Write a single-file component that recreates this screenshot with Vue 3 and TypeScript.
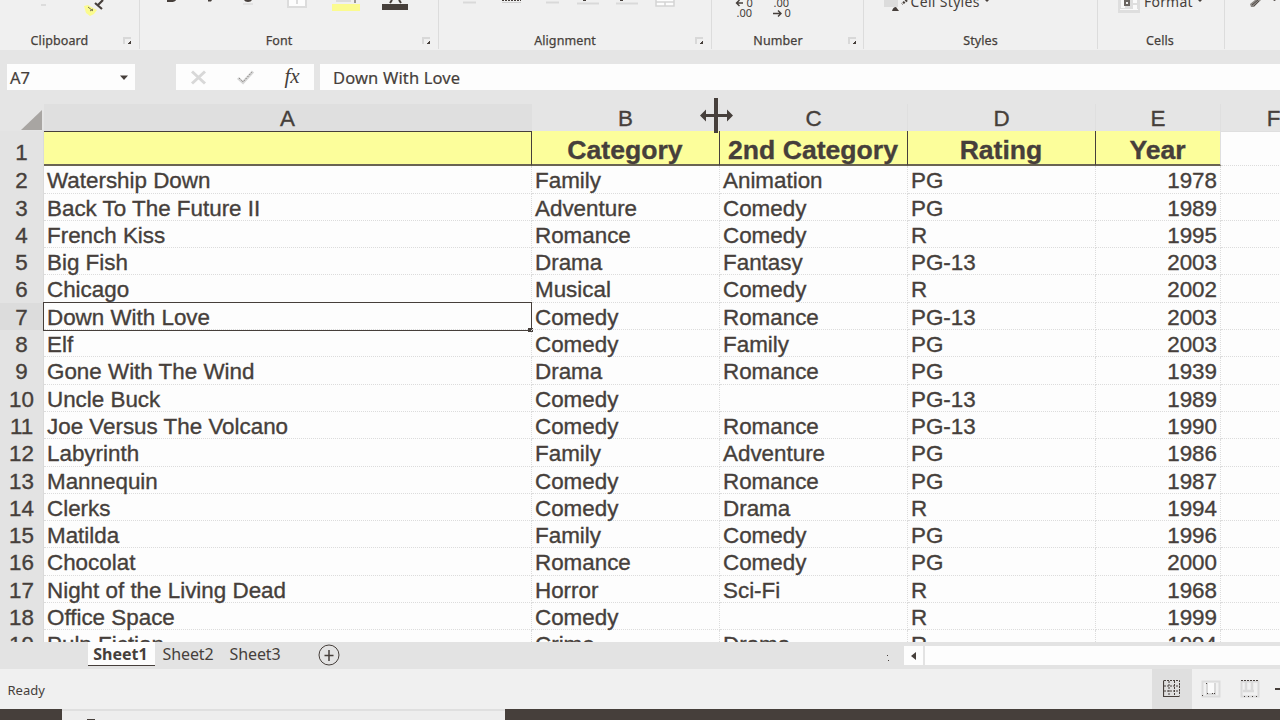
<script setup lang="ts">
interface Movie {
  row: number
  title: string
  category: string
  second: string
  rating: string
  year: string
}

const source: [string, string, string, string, string][] = [
  ['Watership Down', 'Family', 'Animation', 'PG', '1978'],
  ['Back To The Future II', 'Adventure', 'Comedy', 'PG', '1989'],
  ['French Kiss', 'Romance', 'Comedy', 'R', '1995'],
  ['Big Fish', 'Drama', 'Fantasy', 'PG-13', '2003'],
  ['Chicago', 'Musical', 'Comedy', 'R', '2002'],
  ['Down With Love', 'Comedy', 'Romance', 'PG-13', '2003'],
  ['Elf', 'Comedy', 'Family', 'PG', '2003'],
  ['Gone With The Wind', 'Drama', 'Romance', 'PG', '1939'],
  ['Uncle Buck', 'Comedy', '', 'PG-13', '1989'],
  ['Joe Versus The Volcano', 'Comedy', 'Romance', 'PG-13', '1990'],
  ['Labyrinth', 'Family', 'Adventure', 'PG', '1986'],
  ['Mannequin', 'Comedy', 'Romance', 'PG', '1987'],
  ['Clerks', 'Comedy', 'Drama', 'R', '1994'],
  ['Matilda', 'Family', 'Comedy', 'PG', '1996'],
  ['Chocolat', 'Romance', 'Comedy', 'PG', '2000'],
  ['Night of the Living Dead', 'Horror', 'Sci-Fi', 'R', '1968'],
  ['Office Space', 'Comedy', '', 'R', '1999'],
  ['Pulp Fiction', 'Crime', 'Drama', 'R', '1994'],
]

const movies: Movie[] = source.map(([title, category, second, rating, year], i) => ({
  row: i + 2,
  title,
  category,
  second,
  rating,
  year,
}))

const letters = ['A', 'B', 'C', 'D', 'E', 'F']
const headings = ['', 'Category', '2nd Category', 'Rating', 'Year']
const selectedRow = 7
</script>

<template>
  <div class="app">
    <header class="ribbon">
      <section class="group g-clipboard">
        <svg class="art" width="138" height="32" viewBox="0 0 138 32">
          <path d="M41 5h5" stroke="#dcdcdc" stroke-width="2" />
          <path d="M84 6l4-1 5 3 4 2-3 4-4 2-4-3z" fill="#fbfb8f" />
          <path d="M103 0l-6 6M95 3l7 6" stroke="#463f3b" stroke-width="2.2" fill="none" />
          <path d="M88 7l5 4M90 11l3-2" stroke="#77724f" stroke-width="1" />
        </svg>
        <span class="name">Clipboard</span>
        <i class="launcher"></i>
      </section>
      <section class="group g-font">
        <svg class="art" width="298" height="32" viewBox="0 0 298 32">
          <path d="M27 0h9q-1 2-5 2h-4zM68 0h4l-1 1.5h-3zM104 0h8q-1 2-4 2t-4-2z" fill="#463f3b" />
          <path d="M103 4h10" stroke="#d4d4d4" />
          <path d="M148 0v7h18V0M157 0v4" stroke="#dcdcdc" stroke-width="2" fill="#fdfdfd" />
          <path d="M196 1h15" stroke="#dcdcdc" stroke-width="2" />
          <path d="M215 0v3" stroke="#463f3b" />
          <rect x="192" y="4" width="28" height="7" fill="#fbfb90" />
          <path d="M252 0l-2 3M259 0l2 3" stroke="#463f3b" stroke-width="2" />
          <rect x="242" y="4" width="26" height="6" fill="#463f3b" />
        </svg>
        <span class="name">Font</span>
        <i class="launcher"></i>
      </section>
      <section class="group g-align">
        <svg class="art" width="272" height="32" viewBox="0 0 272 32">
          <path d="M24 2.5h13M107 2.5h13M138 3.5h22M177 3.5h22" stroke="#d9d9d9" stroke-width="2" />
          <path d="M63 .5h19" stroke="#463f3b" stroke-dasharray="2 1" />
          <path d="M63 2.5h19" stroke="#cfcfcf" />
          <path d="M144 .5h3M181 .5h3" stroke="#463f3b" />
          <path d="M217 0v6h18V0M217 2h18M226 2v4" stroke="#d4d4d4" stroke-width="1.5" fill="#fdfdfd" />
        </svg>
        <span class="name">Alignment</span>
        <i class="launcher"></i>
      </section>
      <section class="group g-number">
        <svg class="art" width="152" height="32" viewBox="0 0 152 32">
          <g class="digits">
            <text x="34.500" y="6.800">0</text>
            <text x="24.500" y="17.200">.00</text>
            <text x="61.500" y="6.800">.00</text>
            <text x="72.500" y="17.200">0</text>
          </g>
          <path d="M31 3h-6.500M27.500 0l-3 3 3 3M61 13.500h8M66 10.500l3 3-3 3" class="stroke" stroke-width="1.400" />
        </svg>
        <span class="name">Number</span>
        <i class="launcher"></i>
      </section>
      <section class="group g-styles">
        <svg class="art" width="232" height="32" viewBox="0 0 232 32">
          <path d="M20 0h14v7H20z" fill="#dcdcdc" />
          <path d="M43 0l-5 4" stroke="#463f3b" stroke-width="2.5" stroke-dasharray="2 1" />
          <path d="M28 11q1-4 4-4l3 4z" fill="#463f3b" />
          <text x="46.500" y="7" class="cmd" textLength="69">Cell Styles</text>
          <path d="M121 0h4l-2 2z" fill="#463f3b" />
        </svg>
        <span class="name">Styles</span>
      </section>
      <section class="group g-cells">
        <svg class="art" width="126" height="32" viewBox="0 0 126 32">
          <path d="M20 0h22v13H20z" fill="#dedede" />
          <path d="M23 0h4v8h-4zM35 0h4v3h-4zM35 5h4v4h-4zM22 9h18v1H22z" fill="#fafafa" />
          <path d="M26 0h6v6h-6z" fill="#6b6662" />
          <path d="M28 2h2v2h-2z" fill="#f0f0f0" />
          <text x="46" y="7" class="cmd" textLength="48.500">Format</text>
          <path d="M100 0h4l-2 2z" fill="#463f3b" />
        </svg>
        <span class="name">Cells</span>
      </section>
      <section class="group g-rest">
        <svg class="art" width="55" height="32" viewBox="0 0 55 32">
          <path d="M25 4l5-4h6l-7 7h-3z" fill="#8c8884" />
          <path d="M27 5l6-5M29 6l5-5" stroke="#463f3b" stroke-width=".8" />
          <path d="M48 0h3l-1.500 1z" fill="#463f3b" />
        </svg>
      </section>
    </header>

    <div class="formula-bar">
      <div class="name-box">
        <span>A7</span>
        <svg width="8" height="5" viewBox="0 0 8 5"><path d="M0 .5h8L4 5z" fill="#463f3b" /></svg>
      </div>
      <div class="entry">
        <svg width="138" height="26" viewBox="0 0 138 26">
          <path d="M16 7.500l13 12M29 7.500l-13 12" stroke="#d8d8d8" stroke-width="3" />
          <path d="M62 14l5 4.500 10-11" stroke="#d5d5d5" stroke-width="3" fill="none" />
          <path d="M63 14l4 4 9-10" stroke="#6e6965" stroke-width="1" stroke-dasharray="1 1.500" fill="none" />
          <text x="108.500" y="19" class="fx">fx</text>
        </svg>
      </div>
      <div class="formula">Down With Love</div>
    </div>

    <main class="sheet">
      <div class="grid">
        <div class="line letters">
          <div class="corner">
            <svg width="21" height="20" viewBox="0 0 21 20"><path d="M21 0v20H0z" fill="#a8a5a2" /></svg>
          </div>
          <div v-for="l in letters" :key="l" class="letter" :class="{ active: l === 'A' }">{{ l }}</div>
        </div>
        <div class="line headings">
          <div class="num">1</div>
          <div v-for="(h, i) in headings" :key="i" class="heading">{{ h }}</div>
          <div class="cell"></div>
        </div>
        <div v-for="m in movies" :key="m.row" class="line record">
          <div class="num" :class="{ active: m.row === selectedRow }">{{ m.row }}</div>
          <div class="cell">
            {{ m.title }}
            <div v-if="m.row === selectedRow" class="selection"></div>
          </div>
          <div class="cell">{{ m.category }}</div>
          <div class="cell">{{ m.second }}</div>
          <div class="cell">{{ m.rating }}</div>
          <div class="cell year">{{ m.year }}</div>
          <div class="cell"></div>
        </div>
      </div>
      <svg class="resize" width="34" height="36" viewBox="0 0 34 36">
        <path d="M14 0h4v35h-4z" fill="#463f3b" />
        <path d="M0 17.500L6 11.500v4.500h21v-4.500l6 6-6 6v-4.500H6v4.500z" fill="#463f3b" />
      </svg>
    </main>

    <nav class="tabs">
      <span class="tab current">Sheet1</span>
      <span class="tab second-tab">Sheet2</span>
      <span class="tab third-tab">Sheet3</span>
      <svg class="add" width="22" height="22" viewBox="0 0 22 22">
        <circle cx="11" cy="11" r="10" class="stroke" />
        <path d="M11 6v11M6.500 11.500h9" class="stroke" stroke-width="1.500" />
      </svg>
      <svg class="grip" width="4" height="10" viewBox="0 0 4 10"><path d="M1 1h1v1H1zM2 6h1v1H2z" fill="#463f3b" /></svg>
      <div class="scroll-button">
        <svg width="5" height="8" viewBox="0 0 5 8"><path d="M5 0v8L0 4z" fill="#463f3b" /></svg>
      </div>
      <div class="track"></div>
    </nav>

    <footer class="status">
      <span class="ready">Ready</span>
      <div class="view chosen">
        <svg width="18" height="18" viewBox="0 0 18 18">
          <path d="M.5 .5v16h16" class="stroke" stroke-width="1.200" />
          <path d="M1 .5h15.500v15M1 6h16M1 11h16M6 1v15M11.500 1v15" class="stroke" stroke-dasharray="2 1" />
        </svg>
      </div>
      <svg class="view-icon" width="20" height="18" viewBox="0 0 20 18">
        <path d="M1.500 1.500h17v15h-17z" fill="#f1f1f1" stroke="#dcdcdc" stroke-width="2" />
        <path d="M6 3v11h8V3" fill="#fafafa" stroke="#d8d8d8" stroke-width="2" />
        <path d="M5 3h1v1H5zM6 13h1v1H6zM11 13h1v1h-1zM13 13h1v1h-1zM1 15h1v1H1z" fill="#463f3b" />
      </svg>
      <svg class="view-icon last" width="20" height="18" viewBox="0 0 20 18">
        <path d="M1.500 1.500h17v15h-17z" fill="#f1f1f1" stroke="#dadada" stroke-width="2" />
        <path d="M6 1v10M12 1v10M3 11h11" stroke="#dadada" stroke-width="2.500" />
        <path d="M1 .5h18" stroke="#463f3b" stroke-dasharray="2 1" />
        <path d="M4 16.500h15" stroke="#463f3b" stroke-dasharray="1 3" />
      </svg>
      <i class="minus"></i>
    </footer>
    <div class="taskbar">
      <div class="search"><i></i></div>
    </div>
  </div>
</template>

<style>
body {
  overflow: hidden;
}
</style>

<style scoped>
.app {
  width: 1280px;
  height: 720px;
  display: flex;
  flex-direction: column;
  overflow: hidden;
  background: #e5e5e5;
  color: #463f3b;
  font-family: 'Noto Sans', 'Open Sans', sans-serif;
}
svg {
  display: block;
}
.stroke {
  fill: none;
  stroke: #463f3b;
}
.ribbon {
  height: 50px;
  flex: none;
  display: flex;
  background: #f0f0f0;
}
.group {
  box-sizing: border-box;
  height: 49px;
  flex: none;
  display: grid;
  grid-template: 32px 17px / 1fr auto;
  border-right: 1px solid #dcdcdc;
}
.art {
  grid-area: 1 / 1 / 2 / 3;
}
.name {
  grid-area: 2 / 1 / 3 / 3;
  justify-self: center;
  font-size: 12.500px;
  line-height: 17px;
  letter-spacing: 0.1px;
  white-space: nowrap;
  -webkit-text-stroke: 0.25px #463f3b;
}
.launcher {
  grid-area: 2 / 2 / 3 / 3;
  width: 8px;
  height: 7px;
  margin: 5px 8px 0 0;
  box-sizing: border-box;
  border: solid #d8d8d8;
  border-width: 2px 0 0 2px;
  background: linear-gradient(135deg, transparent 65%, #463f3b 66%);
}
.g-clipboard { width: 140px; }
.g-clipboard .name { margin-right: 20px; }
.g-font { width: 299px; }
.g-font .name { margin-right: 20px; }
.g-align { width: 273px; }
.g-align .name { margin-right: 20px; }
.g-number { width: 152px; }
.g-number .name { margin-right: 20px; }
.g-styles { width: 234px; }
.g-cells { width: 127px; }
.g-cells .name { margin-right: 2px; }
.g-rest { width: 55px; border: 0; }
.digits {
  font-size: 11px;
  fill: #463f3b;
}
.cmd {
  font-size: 14px;
  fill: #463f3b;
}
.formula-bar {
  height: 54px;
  flex: none;
  box-sizing: border-box;
  padding: 14px 0 14px 7px;
  display: flex;
}
.name-box,
.entry,
.formula {
  height: 26px;
  background: #fdfdfd;
}
.name-box {
  width: 128px;
  box-sizing: border-box;
  padding: 0 7px 0 3px;
  display: flex;
  align-items: center;
  justify-content: space-between;
  font-size: 16.500px;
  line-height: 27px;
  -webkit-text-stroke: 0.2px #463f3b;
}
.entry {
  width: 138px;
  margin: 0 6px 0 41px;
}
.fx {
  font: italic 21px 'Liberation Serif', serif;
  fill: #463f3b;
}
.formula {
  flex: 1;
  padding-left: 13px;
  font-size: 16.500px;
  letter-spacing: 0.15px;
  line-height: 28px;
  -webkit-text-stroke: 0.2px #463f3b;
}
.sheet {
  position: relative;
  height: 538px;
  flex: none;
  font-family: 'Liberation Sans', Arial, sans-serif;
  font-size: 22.400px;
  -webkit-text-stroke: 0.35px #463f3b;
}
.grid {
  height: 538px;
  overflow: hidden;
  background: #fdfdfd;
}
.line {
  display: grid;
  grid-template-columns: 44px 488px 188px 188px 188px 125px 106px;
  grid-template-rows: 100%;
}
.letters {
  height: 27px;
  background: #e5e5e5;
}
.corner {
  padding: 6px 0 0 21px;
}
.letter {
  box-sizing: border-box;
  text-align: center;
  line-height: 30px;
  border-right: 1px solid #dfdfdf;
}
.letter.active {
  background: #dfdfdf;
}
.headings {
  height: 35.300px;
}
.num {
  background: #e3e3e3;
  text-align: center;
  line-height: 30px;
  border-right: 1px solid #dadada;
  box-sizing: border-box;
}
.num.active {
  background: #dcdcdc;
}
.headings .num {
  line-height: 43px;
}
.heading {
  box-sizing: border-box;
  padding-right: 1px;
  background: #fcfe9b;
  border-right: 1px solid #463f3b;
  border-bottom: 2px solid #6a6453;
  font-size: 26.600px;
  font-weight: bold;
  line-height: 38px;
  text-align: center;
  white-space: nowrap;
}
.heading:nth-child(2) {
  border-top: 1px solid #463f3b;
}
.heading:nth-child(6) {
  border-right-color: #dfdfdf;
}
.record {
  height: 27.310px;
}
.cell {
  position: relative;
  box-sizing: border-box;
  padding: 0 3px;
  border-right: 1px dotted #dcdcdc;
  border-bottom: 1px dotted #dcdcdc;
  line-height: 30px;
  white-space: nowrap;
}
.headings .cell {
  border-top: 1px solid #dfdfdf;
}
.year {
  text-align: right;
}
.selection {
  position: absolute;
  left: -1px;
  top: -1px;
  width: 489px;
  height: 29px;
  box-sizing: border-box;
  border: 1px solid #463f3b;
}
.selection::after {
  content: '';
  position: absolute;
  right: -2px;
  bottom: -2px;
  width: 5px;
  height: 4px;
  background: #463f3b;
}
.resize {
  position: absolute;
  left: 700px;
  top: -6px;
}
.tabs {
  height: 27px;
  flex: none;
  box-sizing: border-box;
  display: flex;
  background: #e3e3e3;
  font-size: 16px;
  line-height: 24px;
}
.tab {
  height: 24px;
  white-space: nowrap;
}
.current {
  width: 67px;
  margin-left: 88px;
  padding-right: 2px;
  text-align: center;
  font-weight: bold;
  box-sizing: border-box;
  background: #fdfdfd;
  border-bottom: 1px solid #463f3b;
}
.second-tab {
  width: 67px;
  margin-left: 7.500px;
  letter-spacing: -0.1px;
}
.third-tab {
  width: 88px;
  letter-spacing: -0.1px;
}
.add {
  margin-top: 2px;
}
.grip {
  margin: 12px 0 0 546px;
}
.scroll-button {
  width: 19px;
  height: 19px;
  margin: 4px 2px 0 auto;
  background: #fdfdfd;
  display: flex;
  align-items: center;
  justify-content: center;
}
.track {
  width: 355px;
  height: 19px;
  margin-top: 4px;
  background: #fdfdfd;
}
.status {
  height: 40px;
  flex: none;
  display: flex;
  align-items: center;
  background: #f0f0f0;
}
.ready {
  margin-left: 7.500px;
  margin-right: auto;
  font-size: 13px;
  line-height: 18px;
  padding-top: 1px;
}
.view {
  width: 40px;
  height: 40px;
  display: flex;
  align-items: center;
  justify-content: center;
  background: #dfdfdf;
}
.view-icon {
  margin-left: 9px;
}
.view-icon.last {
  margin: 0 15px 0 19px;
}
.minus {
  width: 5px;
  height: 2px;
  background: #463f3b;
}
.taskbar {
  flex: 1;
  background: #463f3b;
}
.search {
  width: 443px;
  height: 11px;
  margin-left: 62px;
  box-sizing: border-box;
  padding: 10px 0 0 25px;
  background: #ededed;
  box-shadow: inset 0 2px #dfdfdf;
}
.search i {
  display: block;
  width: 8px;
  height: 1px;
  background: #463f3b;
}
</style>
